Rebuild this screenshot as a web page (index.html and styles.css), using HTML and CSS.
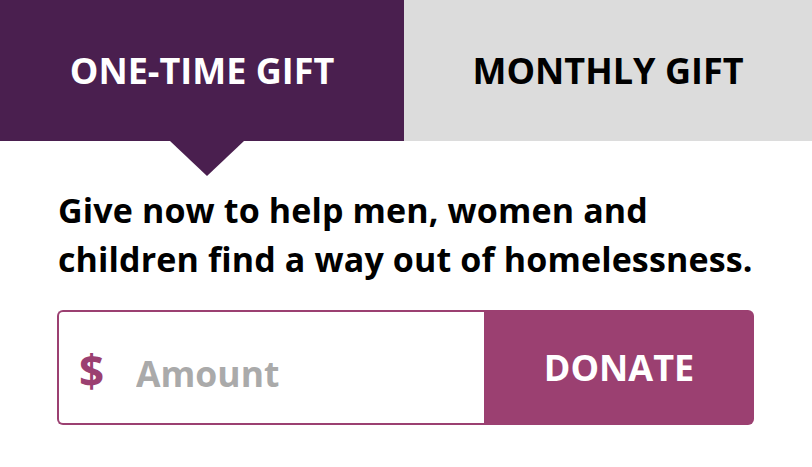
FILE: index.html
```html
<!DOCTYPE html>
<html lang="en">
<head>
<meta charset="utf-8">
<title>Donate</title>
<link rel="stylesheet" href="styles.css">
</head>
<body>
<div class="widget">
  <div class="tabs">
    <div class="tab tab-active">ONE-TIME GIFT<span class="tab-arrow"></span></div>
    <div class="tab tab-inactive">MONTHLY GIFT</div>
  </div>
  <p class="intro">Give now to help men, women and children find a way out of homelessness.</p>
  <form class="donate-form">
    <label class="amount-field">
      <span class="currency">$</span>
      <input class="amount-input" type="text" placeholder="Amount">
    </label>
    <button class="donate-btn" type="button">DONATE</button>
  </form>
</div>
</body>
</html>
```
FILE: styles.css
```css
* { box-sizing: border-box; }
html, body { margin: 0; padding: 0; background: #fff; }
body { font-family: "Open Sans", "Noto Sans", sans-serif; }
.widget { width: 812px; height: 467px; }
.tabs { display: flex; height: 141px; }
.tab {
  position: relative;
  display: flex;
  align-items: center;
  justify-content: center;
  font-weight: 700;
  font-size: 36px;
}
.tab-active { width: 404px; background: #4a1f4f; color: #fff; }
.tab-inactive { flex: 1; background: #dcdcdc; color: #000; }
.tab-arrow {
  position: absolute;
  top: 141px;
  left: 170px;
  width: 0; height: 0;
  border-left: 37.5px solid transparent;
  border-right: 37.5px solid transparent;
  border-top: 35px solid #4a1f4f;
}
.intro {
  width: 716px;
  margin: 45px 0 0 58px;
  font-size: 34px;
  letter-spacing: 0.13px;
  font-weight: 700;
  line-height: 49px;
  color: #000;
}
.donate-form {
  display: flex;
  margin: 26px 58px 0 57px;
  height: 115px;
}
.amount-field {
  flex: 1;
  display: flex;
  align-items: center;
  border: 2px solid #9b4071;
  border-right: 0;
  border-radius: 6px 0 0 6px;
  padding-left: 20px;
}
.currency {
  color: #9b4071; font-weight: 700; font-size: 44px;
  width: 57px; padding-top: 4px;
}
.amount-input {
  border: 0; outline: 0; width: 300px;
  font-family: inherit; font-weight: 700; font-size: 35.5px; color: #333;
  background: transparent; padding: 10px 0 0 0;
}
.amount-input::placeholder { color: #aaa; }
.donate-btn {
  width: 270px;
  border: 0;
  border-radius: 0 6px 6px 0;
  background: #9b4071;
  color: #fff;
  font-family: inherit;
  font-weight: 700;
  font-size: 36px;
  padding: 0;
}
```
